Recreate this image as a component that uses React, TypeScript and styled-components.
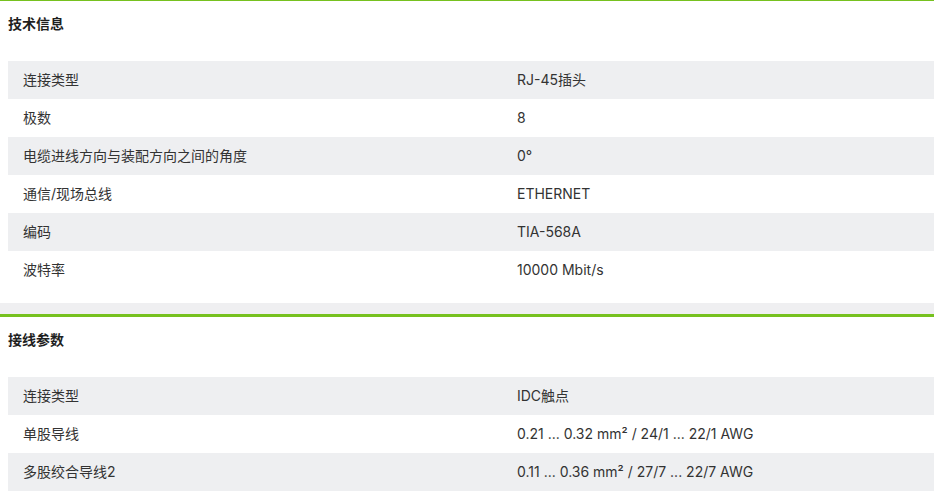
import React from 'react';
import styled, {createGlobalStyle} from "styled-components";

type Spec = { label: string; value: string };

const sections: { title: string; rows: Spec[] }[] = [
    {
        title: "技术信息",
        rows: [
            {label: "连接类型", value: "RJ-45插头"},
            {label: "极数", value: "8"},
            {label: "电缆进线方向与装配方向之间的角度", value: "0°"},
            {label: "通信/现场总线", value: "ETHERNET"},
            {label: "编码", value: "TIA-568A"},
            {label: "波特率", value: "10000 Mbit/s"},
        ],
    },
    {
        title: "接线参数",
        rows: [
            {label: "连接类型", value: "IDC触点"},
            {label: "单股导线", value: "0.21 ... 0.32 mm² / 24/1 ... 22/1 AWG"},
            {label: "多股绞合导线2", value: "0.11 ... 0.36 mm² / 27/7 ... 22/7 AWG"},
        ],
    },
];

const App: React.FC = () => {
    return (
        <>
            <GlobalStyle/>
            <Page>
                {sections.map((section) =>
                    <SectionCard key={section.title}>
                        <SectionTitle>{section.title}</SectionTitle>
                        <SpecTable>
                            {section.rows.map((row, index) =>
                                <SpecRow key={`${row.label}${index}`} striped={`${index % 2 === 0}`}>
                                    <SpecCell>{row.label}</SpecCell>
                                    <SpecCell>{row.value}</SpecCell>
                                </SpecRow>
                            )}
                        </SpecTable>
                    </SectionCard>
                )}
            </Page>
        </>
    );
};

const GlobalStyle = createGlobalStyle`
    html, body {
        margin: 0;
        padding: 0;
        background: #ffffff;
        overflow: hidden;
    }
    body {
        font-family: Inter, "Noto Sans CJK SC", sans-serif;
        color: #333333;
    }
`;
const Page = styled.div`
    display: flex;
    flex-direction: column;
    gap: 11px;
    margin-top: -2px;
    background: #efeff1;
`;
const SectionCard = styled.section`
    background: #ffffff;
    border-top: 3px solid #76c11f;
    padding: 0 0 14px 8px;
`;
const SectionTitle = styled.h3`
    margin: 0 0 26px;
    padding-top: 12px;
    font-size: 14px;
    line-height: 22px;
    font-weight: 700;
    color: #1f1f1f;
`;
const SpecTable = styled.div`
    display: flex;
    flex-direction: column;
`;
const SpecRow = styled.div<{ striped: "true" | "false" }>`
    display: grid;
    grid-template-columns: 494px 1fr;
    height: 38px;
    align-items: center;
    background: ${(props) => props.striped === "true" ? "#eeeff1" : "#ffffff"};
`;
const SpecCell = styled.div`
    padding: 0 15px;
    font-size: 14px;
    line-height: 20px;
    color: #333333;
    white-space: nowrap;
`;

export default App;
